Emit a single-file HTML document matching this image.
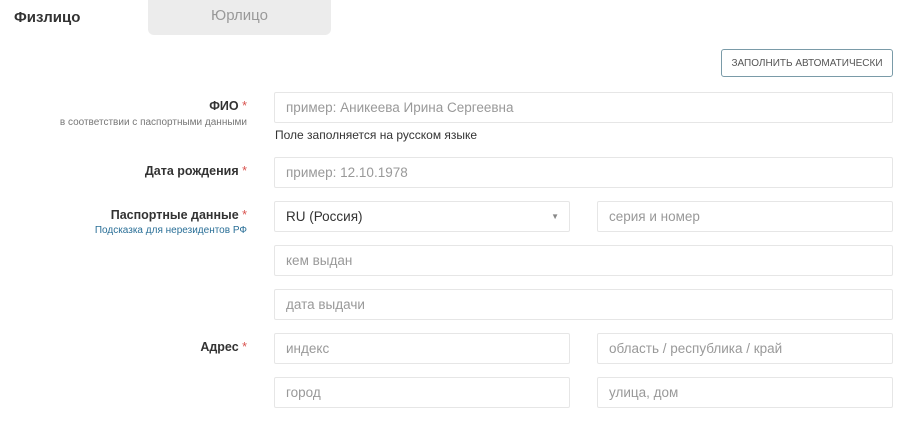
<!DOCTYPE html><html><head><meta charset="utf-8"><style>
body{margin:0;width:900px;height:429px;background:#fff;font-family:"Liberation Sans",sans-serif;position:relative;overflow:hidden}
.a{position:absolute}
.in{position:absolute;box-sizing:border-box;border:1px solid #e6e6e6;border-radius:2px;height:31px;font-size:13.5px;color:#999;padding-left:11px;line-height:29px}
.lb{position:absolute;right:653px;text-align:right;font-size:12.5px;font-weight:bold;color:#333;white-space:nowrap}
.lb i{color:#d9534f;font-style:normal;font-weight:normal}
.sub{position:absolute;right:653px;font-size:10px;white-space:nowrap}
</style></head><body>
<div class="a" style="left:14px;top:9px;font-size:15px;font-weight:bold;color:#333">Физлицо</div>
<div class="a" style="left:148px;top:0;width:183px;height:35px;background:#ececec;border-radius:0 0 6px 6px;text-align:center;line-height:32px;font-size:15px;color:#999">Юрлицо</div>
<div class="a" style="left:721px;top:49px;width:172px;height:28px;box-sizing:border-box;border:1px solid #7a9ba8;border-radius:3px;font-size:10px;color:#555;text-align:center;line-height:28px">ЗАПОЛНИТЬ АВТОМАТИЧЕСКИ</div>
<div class="lb" style="top:99px">ФИО <i>*</i></div>
<div class="sub" style="top:117px;color:#777">в соответствии с паспортными данными</div>
<div class="in" style="left:274px;top:92px;width:619px">пример: Аникеева Ирина Сергеевна</div>
<div class="a" style="left:275px;top:128px;font-size:12px;color:#333">Поле заполняется на русском языке</div>
<div class="lb" style="top:164px">Дата рождения <i>*</i></div>
<div class="in" style="left:274px;top:157px;width:619px">пример: 12.10.1978</div>
<div class="lb" style="top:208px">Паспортные данные <i>*</i></div>
<div class="sub" style="top:225px;color:#2a6f97">Подсказка для нерезидентов РФ</div>
<div class="in" style="left:274px;top:201px;width:296px;color:#333">RU (Россия)<span class="a" style="right:10px;top:0;font-size:8px;color:#888">▼</span></div>
<div class="in" style="left:597px;top:201px;width:296px">серия и номер</div>
<div class="in" style="left:274px;top:245px;width:619px">кем выдан</div>
<div class="in" style="left:274px;top:289px;width:619px">дата выдачи</div>
<div class="lb" style="top:340px">Адрес <i>*</i></div>
<div class="in" style="left:274px;top:333px;width:296px">индекс</div>
<div class="in" style="left:597px;top:333px;width:296px">область / республика / край</div>
<div class="in" style="left:274px;top:377px;width:296px">город</div>
<div class="in" style="left:597px;top:377px;width:296px">улица, дом</div>
</body></html>
